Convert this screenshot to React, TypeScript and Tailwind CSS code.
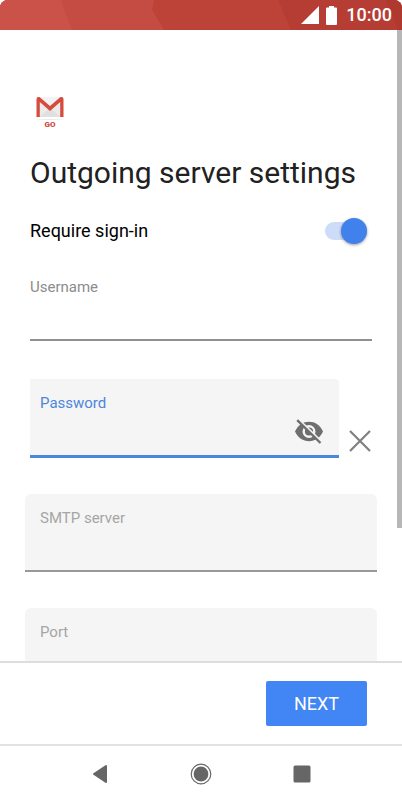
import React, { useState } from "react";

function StatusBar() {
  return (
    <header className="relative h-[30px] shrink-0 overflow-hidden rounded-t-lg bg-[#bd4339]">
      <svg
        className="absolute inset-0 h-full w-full"
        viewBox="0 0 402 30"
        preserveAspectRatio="none"
        aria-hidden="true"
      >
        <path d="M0 0H154L152 10L164 30H0Z" fill="#c54c43" />
        <path d="M0 0H61L72 30H0Z" fill="#ca5249" />
        <path d="M278 0H402V30H291Z" fill="#b63d34" />
        <path d="M386 0H402V30H398Z" fill="#b0392f" />
      </svg>
      <div className="relative flex h-full items-center justify-end pr-[10px] text-white">
        <svg width="18" height="18" viewBox="0 0 18 18" className="mr-[7px]" aria-hidden="true">
          <path d="M18 0V18H0Z" fill="currentColor" />
        </svg>
        <svg width="11" height="19" viewBox="0 0 11 19" className="mr-[9px]" aria-hidden="true">
          <path
            d="M3 0H8V1.5H10Q11 1.5 11 2.5V18Q11 19 10 19H1Q0 19 0 18V2.5Q0 1.5 1 1.5H3Z"
            fill="currentColor"
          />
        </svg>
        <span className="text-lg leading-[30px] font-medium">10:00</span>
      </div>
    </header>
  );
}

function Logo() {
  return (
    <div className="flex w-10 flex-col items-center">
      <svg width="34" height="26" viewBox="0 0 34 26" aria-hidden="true">
        <path d="M4 3H30V23H4Z" fill="#ebebeb" />
        <path d="M6 23L17 14L28 23Z" fill="#e0e0e0" />
        <path d="M6 3H28L17 14Z" fill="#f3f3f3" />
        <path
          d="M3.5 23V5Q3.5 3 5.5 3H6.5L17 12L27.5 3H28.5Q30.5 3 30.5 5V23H27.2V8L17 17L6.8 8V23Z"
          fill="#d54b3d"
        />
        <path d="M0 26Q17 24.5 34 26Z" fill="#e2e2e2" />
      </svg>
      <span className="text-[8px] leading-[9px] font-black text-[#cf4a40]">GO</span>
    </div>
  );
}

function EyeIcon({ crossed }: { crossed: boolean }) {
  return (
    <svg width="30" height="26" viewBox="0 0 30 26" aria-hidden="true">
      <path
        d="M1 12.5C4 6 9 2.8 15 2.8S26 6 29 12.5C26 19 21 22.2 15 22.2S4 19 1 12.5Z"
        fill="currentColor"
      />
      <circle cx="15" cy="12.5" r="5.3" fill="none" stroke="#f5f5f5" strokeWidth="2.4" />
      {crossed && (
        <>
          <path d="M5 0.5L28.5 23.5" stroke="#f5f5f5" strokeWidth="1.8" />
          <path d="M3.2 1.2L26.5 24" stroke="currentColor" strokeWidth="2.4" />
        </>
      )}
    </svg>
  );
}

type FieldProps = {
  id: string;
  label: string;
  value: string;
  onChange: (value: string) => void;
};

function FilledField({ id, label, value, onChange }: FieldProps) {
  return (
    <div className="-mx-[5px] flex h-[78px] shrink-0 flex-col rounded-t-md border-b-2 border-[#999999] bg-[#f5f5f5] px-[15px] pt-[14px]">
      <label htmlFor={id} className="text-[15px] leading-5 text-[#a5a5a5]">
        {label}
      </label>
      <input
        id={id}
        type="text"
        className="min-h-0 w-full flex-1 bg-transparent text-lg outline-none"
        value={value}
        onChange={(e) => onChange(e.target.value)}
      />
    </div>
  );
}

function App() {
  const [requireSignIn, setRequireSignIn] = useState<boolean>(true);
  const [username, setUsername] = useState<string>("");
  const [password, setPassword] = useState<string>("");
  const [showPassword, setShowPassword] = useState<boolean>(false);
  const [server, setServer] = useState<string>("");
  const [port, setPort] = useState<string>("");

  return (
    <div className="flex h-screen flex-col bg-white font-['Roboto',sans-serif] text-[#212121]">
      <StatusBar />

      <div className="relative min-h-0 flex-1">
        <main className="h-full overflow-y-auto [scrollbar-width:none]">
          <form
            id="outgoing-form"
            onSubmit={(e) => e.preventDefault()}
            className="flex flex-col px-[30px] pt-16 pb-8"
          >
            <Logo />
            <h1 className="mt-6 text-[30px] leading-10 whitespace-nowrap">
              Outgoing server settings
            </h1>

            <div className="mt-[23px] flex h-[30px] items-center justify-between pr-[5px]">
              <label htmlFor="require-sign-in" className="text-lg text-black">
                Require sign-in
              </label>
              <input
                id="require-sign-in"
                type="checkbox"
                role="switch"
                checked={requireSignIn}
                onChange={(e) => setRequireSignIn(e.target.checked)}
                className="flex h-[18px] w-[42px] appearance-none items-center rounded-full bg-gray-300 before:size-[26px] before:shrink-0 before:rounded-full before:bg-gray-50 before:shadow-[0_1px_3px_rgba(0,0,0,0.4)] checked:justify-end checked:bg-[#cddcf8] checked:before:bg-[#4081ec]"
              />
            </div>

            <div className="mt-[31px] flex h-16 flex-col border-b-2 border-[#909090]">
              <label htmlFor="username" className="text-[15px] leading-5 text-[#8c8c8c]">
                Username
              </label>
              <input
                id="username"
                type="text"
                className="min-h-0 w-full flex-1 bg-transparent text-lg outline-none"
                value={username}
                onChange={(e) => setUsername(e.target.value)}
              />
            </div>

            <div className="mt-[38px] flex items-end">
              <div className="flex h-[79px] min-w-0 flex-1 flex-col rounded-tr border-b-3 border-[#4c86dd] bg-[#f5f5f5] px-[10px] pt-[14px]">
                <label htmlFor="password" className="text-[15px] leading-5 text-[#4c86dd]">
                  Password
                </label>
                <div className="flex flex-1 items-center">
                  <input
                    id="password"
                    type={showPassword ? "text" : "password"}
                    className="min-w-0 flex-1 bg-transparent text-lg outline-none"
                    value={password}
                    onChange={(e) => setPassword(e.target.value)}
                  />
                  <button
                    type="button"
                    aria-label="Toggle password visibility"
                    className="mr-[5px] mb-1 text-[#6f6f6f]"
                    onClick={() => setShowPassword(!showPassword)}
                  >
                    <EyeIcon crossed={!showPassword} />
                  </button>
                </div>
              </div>
              <button
                type="button"
                aria-label="Clear password"
                className="mr-px mb-[6px] ml-[10px] text-[#808080]"
                onClick={() => setPassword("")}
              >
                <svg width="22" height="22" viewBox="0 0 22 22" fill="none" aria-hidden="true">
                  <path d="M1 1L21 21M21 1L1 21" stroke="currentColor" strokeWidth="2.2" />
                </svg>
              </button>
            </div>

            <div className="mt-9 flex flex-col gap-9">
              <FilledField id="server" label="SMTP server" value={server} onChange={setServer} />
              <FilledField id="port" label="Port" value={port} onChange={setPort} />
            </div>
          </form>
        </main>
        {/* scroll indicator */}
        <div className="absolute top-0 right-0 h-[79%] w-[5px] bg-[#b7b7b7]" />
      </div>

      <footer className="flex shrink-0 justify-end border-t-2 border-[#dddddd] px-[35px] py-[18px]">
        <button
          type="submit"
          form="outgoing-form"
          className="h-[45px] w-[101px] rounded-xs bg-[#4285f4] text-lg text-white"
        >
          NEXT
        </button>
      </footer>

      <nav className="flex h-[60px] shrink-0 items-center justify-around border-t-2 border-[#e2e2e2] px-[50px] pb-[2px] text-[#666666]">
        <button type="button" aria-label="Back">
          <svg width="22" height="22" viewBox="0 0 22 22" aria-hidden="true">
            <path
              d="M5 11L17 3V19Z"
              fill="currentColor"
              stroke="currentColor"
              strokeWidth="2"
              strokeLinejoin="round"
            />
          </svg>
        </button>
        <button type="button" aria-label="Home">
          <svg width="22" height="22" viewBox="0 0 22 22" aria-hidden="true">
            <circle cx="11" cy="11" r="9.8" fill="none" stroke="currentColor" strokeWidth="1.2" />
            <circle cx="11" cy="11" r="7.4" fill="currentColor" />
          </svg>
        </button>
        <button type="button" aria-label="Recent apps">
          <svg width="22" height="22" viewBox="0 0 22 22" aria-hidden="true">
            <rect x="2.5" y="2.5" width="17" height="17" rx="1.5" fill="currentColor" />
          </svg>
        </button>
      </nav>
    </div>
  );
}

export default App;
